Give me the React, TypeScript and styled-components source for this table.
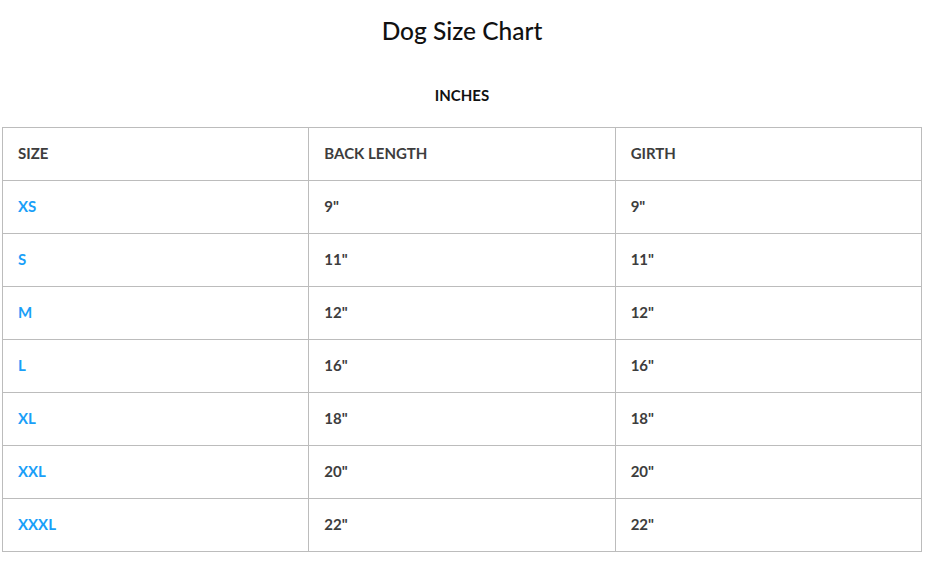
import React from "react";
import styled, { createGlobalStyle } from "styled-components";

const Global = createGlobalStyle`
  html, body { margin: 0; padding: 0; background: #fff; }
  body { font-family: Lato, "Open Sans", sans-serif; color: #333; }
`;

const Page = styled.div`
  width: 920px;
  margin-left: 2px;
  display: flex;
  flex-direction: column;
  align-items: center;
`;

const Title = styled.h1`
  margin: 17px 0 0;
  font-size: 24.5px;
  font-weight: 500;
  line-height: 28px;
  color: #111;
`;

const Unit = styled.h3`
  margin: 41px 0 0;
  font-size: 15px;
  font-weight: 700;
  line-height: 18px;
  color: #111;
`;

const Table = styled.table`
  margin-top: 23px;
  width: 920px;
  border-collapse: collapse;
  table-layout: fixed;
`;

const Cell = styled.td<{ $accent?: boolean }>`
  border: 1px solid #bcbcbc;
  height: 53px;
  box-sizing: border-box;
  padding: 0 15px 2px;
  font-size: 15px;
  font-weight: 700;
  color: ${(p) => (p.$accent ? "#1a9ff8" : "#3d3d3d")};
`;

const rows = [
  ["XS", '9"', '9"'],
  ["S", '11"', '11"'],
  ["M", '12"', '12"'],
  ["L", '16"', '16"'],
  ["XL", '18"', '18"'],
  ["XXL", '20"', '20"'],
  ["XXXL", '22"', '22"'],
];

export default function App() {
  return (
    <>
      <Global />
      <Page>
        <Title>Dog Size Chart</Title>
        <Unit>INCHES</Unit>
        <Table>
          <tbody>
            <tr>
              <Cell>SIZE</Cell>
              <Cell>BACK LENGTH</Cell>
              <Cell>GIRTH</Cell>
            </tr>
            {rows.map((r) => (
              <tr key={r[0]}>
                <Cell $accent>{r[0]}</Cell>
                <Cell>{r[1]}</Cell>
                <Cell>{r[2]}</Cell>
              </tr>
            ))}
          </tbody>
        </Table>
      </Page>
    </>
  );
}
